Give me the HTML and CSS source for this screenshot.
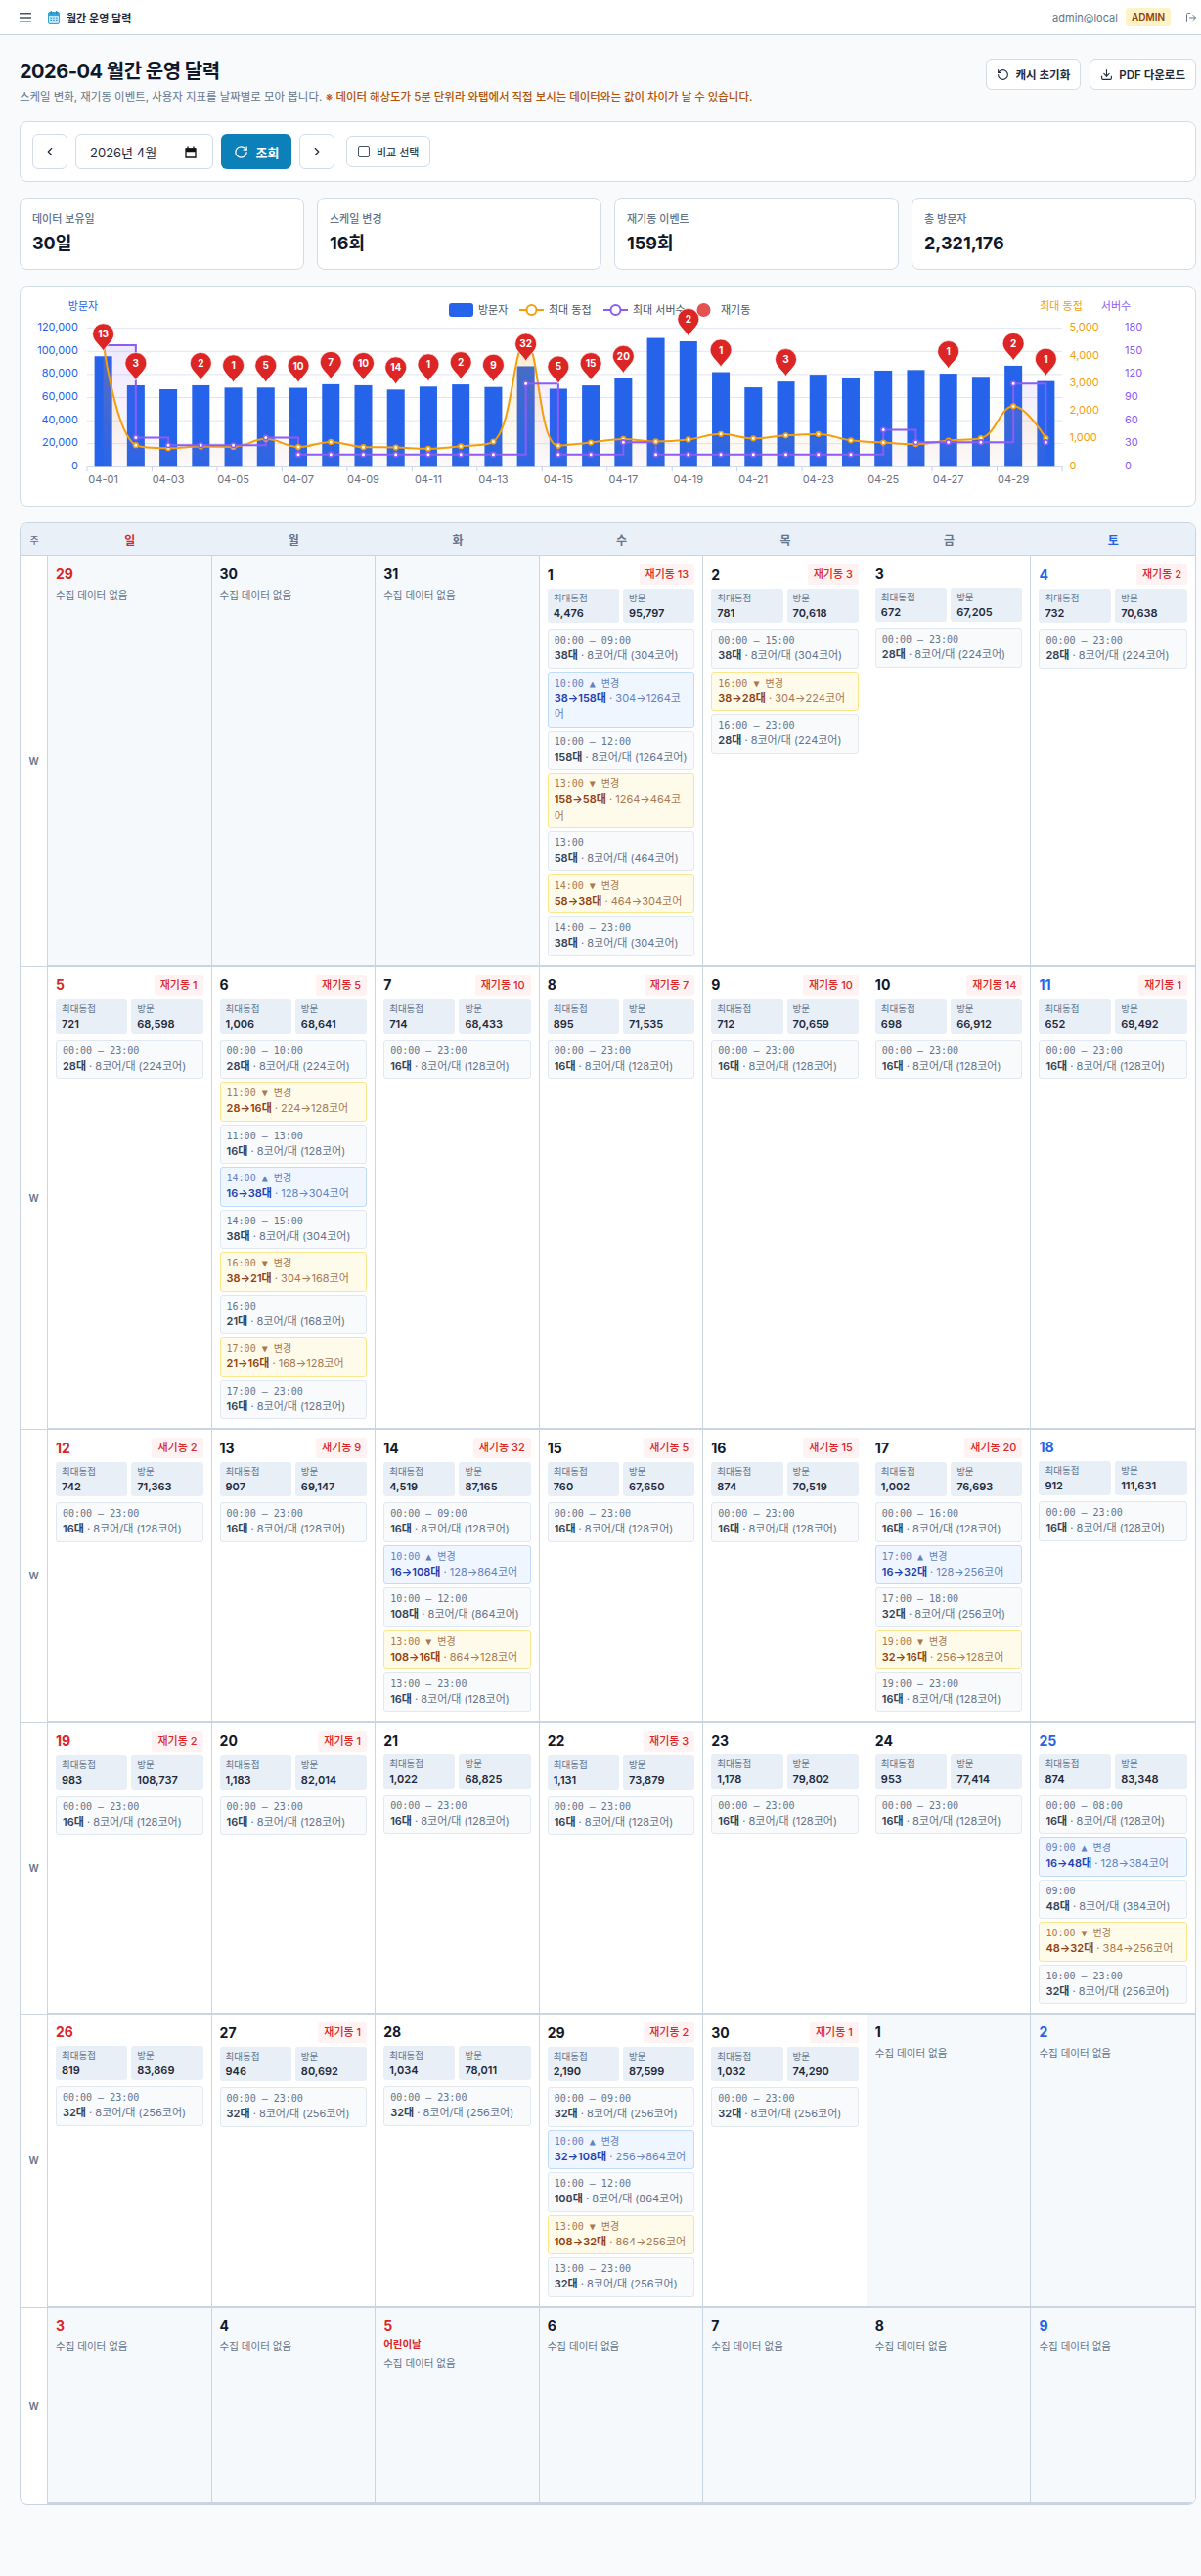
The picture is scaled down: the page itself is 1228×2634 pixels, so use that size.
FILE: index.html
```html
<!DOCTYPE html>
<html lang="ko">
<head>
<meta charset="utf-8">
<title>월간 운영 달력</title>
<link rel="stylesheet" href="styles.css">
</head>
<body>
<header class="topbar">
  <div class="topbar-left">
    <svg class="ico-menu" viewBox="0 0 12 10" width="12" height="10"><path d="M0 .8h12M0 5h12M0 9.2h12" fill="none" stroke="#475569" stroke-width="1.5"/></svg>
    <svg class="ico-cal" viewBox="0 0 12 14" width="12" height="14"><rect x=".5" y="1.5" width="11" height="12" rx="1.5" fill="#bae6fd" stroke="#38a3d8"/><rect x=".5" y="1.5" width="11" height="3.6" rx="1" fill="#38a3d8"/><path d="M3.3 0v3M8.7 0v3" stroke="#1d87c0" stroke-width="1.2"/><path d="M2.5 7.2h1.4M5.3 7.2h1.4M8.1 7.2h1.4M2.5 9.4h1.4M5.3 9.4h1.4M8.1 9.4h1.4M2.5 11.5h1.4M5.3 11.5h1.4" stroke="#1f7fb3"/></svg>
    <span class="app-title">월간 운영 달력</span>
  </div>
  <div class="topbar-right">
    <span class="user">admin@local</span>
    <span class="role">ADMIN</span>
    <svg class="lucide ico-out" viewBox="0 0 24 24" width="12" height="12"><path d="M9 21H5a2 2 0 0 1-2-2V5a2 2 0 0 1 2-2h4"/><polyline points="16 17 21 12 16 7"/><line x1="21" y1="12" x2="9" y2="12"/></svg>
  </div>
</header>

<main class="page">
  <section class="head">
    <div>
      <h1>2026-04 월간 운영 달력</h1>
      <p class="sub">스케일 변화, 재기동 이벤트, 사용자 지표를 날짜별로 모아 봅니다. <span class="warn">※ 데이터 해상도가 5분 단위라 와탭에서 직접 보시는 데이터와는 값이 차이가 날 수 있습니다.</span></p>
    </div>
    <div class="head-actions">
      <button class="btn"><svg class="lucide" viewBox="0 0 24 24" width="13" height="13"><path d="M3 12a9 9 0 1 0 9-9 9.75 9.75 0 0 0-6.74 2.74L3 8"/><path d="M3 3v5h5"/></svg>캐시 초기화</button>
      <button class="btn"><svg class="lucide" viewBox="0 0 24 24" width="13" height="13"><path d="M21 15v4a2 2 0 0 1-2 2H5a2 2 0 0 1-2-2v-4"/><polyline points="7 10 12 15 17 10"/><line x1="12" y1="15" x2="12" y2="3"/></svg>PDF 다운로드</button>
    </div>
  </section>

  <section class="card toolbar">
    <button class="nav"><svg class="lucide" viewBox="0 0 24 24" width="14" height="14"><polyline points="15 18 9 12 15 6"/></svg></button>
    <div class="month"><span>2026년 4월</span><svg viewBox="0 0 12 13" width="12" height="13"><path d="M1 3h10v9H1zM1 3h10v2.6H1z" fill="none" stroke="#111" stroke-width="1.3"/><rect x="1" y="2.5" width="10" height="2.5" fill="#111"/><path d="M3 .5v2M9 .5v2" stroke="#111" stroke-width="1.3"/></svg></div>
    <button class="search"><svg class="lucide" viewBox="0 0 24 24" width="15" height="15"><path d="M21 12a9 9 0 1 1-9-9c2.52 0 4.93 1 6.74 2.74L21 8"/><path d="M21 3v5h-5"/></svg>조회</button>
    <button class="nav"><svg class="lucide" viewBox="0 0 24 24" width="14" height="14"><polyline points="9 18 15 12 9 6"/></svg></button>
    <button class="compare"><span class="check"></span>비교 선택</button>
  </section>

  <section class="stats">
    <div class="card stat"><div class="stat-label">데이터 보유일</div><div class="stat-value">30일</div></div>
    <div class="card stat"><div class="stat-label">스케일 변경</div><div class="stat-value">16회</div></div>
    <div class="card stat"><div class="stat-label">재기동 이벤트</div><div class="stat-value">159회</div></div>
    <div class="card stat"><div class="stat-label">총 방문자</div><div class="stat-value">2,321,176</div></div>
  </section>

  <section class="card chart" id="chart"></section>

  <section class="calendar">
    <div class="row header">
      <div class="hd">주</div><div class="hd sun">일</div><div class="hd">월</div><div class="hd">화</div><div class="hd">수</div><div class="hd">목</div><div class="hd">금</div><div class="hd sat">토</div>
    </div>

    <div class="row">
      <div class="wk">W</div>
      <div class="day off"><div class="top"><span class="num sun">29</span></div><div class="none">수집 데이터 없음</div></div>
      <div class="day off"><div class="top"><span class="num">30</span></div><div class="none">수집 데이터 없음</div></div>
      <div class="day off"><div class="top"><span class="num">31</span></div><div class="none">수집 데이터 없음</div></div>
      <div class="day"><div class="top"><span class="num">1</span><span class="re">재기동 13</span></div>
        <div class="minis"><div class="mini"><span>최대동접</span><b>4,476</b></div><div class="mini"><span>방문</span><b>95,797</b></div></div>
        <div class="slots">
          <div class="slot"><div class="t">00:00 – 09:00</div><div class="d"><b>38대</b> · 8코어/대 (304코어)</div></div>
          <div class="slot up"><div class="t">10:00 ▲ 변경</div><div class="d"><b>38→158대</b> · 304→1264코어</div></div>
          <div class="slot"><div class="t">10:00 – 12:00</div><div class="d"><b>158대</b> · 8코어/대 (1264코어)</div></div>
          <div class="slot down"><div class="t">13:00 ▼ 변경</div><div class="d"><b>158→58대</b> · 1264→464코어</div></div>
          <div class="slot"><div class="t">13:00</div><div class="d"><b>58대</b> · 8코어/대 (464코어)</div></div>
          <div class="slot down"><div class="t">14:00 ▼ 변경</div><div class="d"><b>58→38대</b> · 464→304코어</div></div>
          <div class="slot"><div class="t">14:00 – 23:00</div><div class="d"><b>38대</b> · 8코어/대 (304코어)</div></div>
        </div></div>
      <div class="day"><div class="top"><span class="num">2</span><span class="re">재기동 3</span></div>
        <div class="minis"><div class="mini"><span>최대동접</span><b>781</b></div><div class="mini"><span>방문</span><b>70,618</b></div></div>
        <div class="slots">
          <div class="slot"><div class="t">00:00 – 15:00</div><div class="d"><b>38대</b> · 8코어/대 (304코어)</div></div>
          <div class="slot down"><div class="t">16:00 ▼ 변경</div><div class="d"><b>38→28대</b> · 304→224코어</div></div>
          <div class="slot"><div class="t">16:00 – 23:00</div><div class="d"><b>28대</b> · 8코어/대 (224코어)</div></div>
        </div></div>
      <div class="day"><div class="top"><span class="num">3</span></div>
        <div class="minis"><div class="mini"><span>최대동접</span><b>672</b></div><div class="mini"><span>방문</span><b>67,205</b></div></div>
        <div class="slots"><div class="slot"><div class="t">00:00 – 23:00</div><div class="d"><b>28대</b> · 8코어/대 (224코어)</div></div></div></div>
      <div class="day"><div class="top"><span class="num sat">4</span><span class="re">재기동 2</span></div>
        <div class="minis"><div class="mini"><span>최대동접</span><b>732</b></div><div class="mini"><span>방문</span><b>70,638</b></div></div>
        <div class="slots"><div class="slot"><div class="t">00:00 – 23:00</div><div class="d"><b>28대</b> · 8코어/대 (224코어)</div></div></div></div>
    </div>

    <div class="row">
      <div class="wk">W</div>
      <div class="day"><div class="top"><span class="num sun">5</span><span class="re">재기동 1</span></div>
        <div class="minis"><div class="mini"><span>최대동접</span><b>721</b></div><div class="mini"><span>방문</span><b>68,598</b></div></div>
        <div class="slots"><div class="slot"><div class="t">00:00 – 23:00</div><div class="d"><b>28대</b> · 8코어/대 (224코어)</div></div></div></div>
      <div class="day"><div class="top"><span class="num">6</span><span class="re">재기동 5</span></div>
        <div class="minis"><div class="mini"><span>최대동접</span><b>1,006</b></div><div class="mini"><span>방문</span><b>68,641</b></div></div>
        <div class="slots">
          <div class="slot"><div class="t">00:00 – 10:00</div><div class="d"><b>28대</b> · 8코어/대 (224코어)</div></div>
          <div class="slot down"><div class="t">11:00 ▼ 변경</div><div class="d"><b>28→16대</b> · 224→128코어</div></div>
          <div class="slot"><div class="t">11:00 – 13:00</div><div class="d"><b>16대</b> · 8코어/대 (128코어)</div></div>
          <div class="slot up"><div class="t">14:00 ▲ 변경</div><div class="d"><b>16→38대</b> · 128→304코어</div></div>
          <div class="slot"><div class="t">14:00 – 15:00</div><div class="d"><b>38대</b> · 8코어/대 (304코어)</div></div>
          <div class="slot down"><div class="t">16:00 ▼ 변경</div><div class="d"><b>38→21대</b> · 304→168코어</div></div>
          <div class="slot"><div class="t">16:00</div><div class="d"><b>21대</b> · 8코어/대 (168코어)</div></div>
          <div class="slot down"><div class="t">17:00 ▼ 변경</div><div class="d"><b>21→16대</b> · 168→128코어</div></div>
          <div class="slot"><div class="t">17:00 – 23:00</div><div class="d"><b>16대</b> · 8코어/대 (128코어)</div></div>
        </div></div>
      <div class="day"><div class="top"><span class="num">7</span><span class="re">재기동 10</span></div>
        <div class="minis"><div class="mini"><span>최대동접</span><b>714</b></div><div class="mini"><span>방문</span><b>68,433</b></div></div>
        <div class="slots"><div class="slot"><div class="t">00:00 – 23:00</div><div class="d"><b>16대</b> · 8코어/대 (128코어)</div></div></div></div>
      <div class="day"><div class="top"><span class="num">8</span><span class="re">재기동 7</span></div>
        <div class="minis"><div class="mini"><span>최대동접</span><b>895</b></div><div class="mini"><span>방문</span><b>71,535</b></div></div>
        <div class="slots"><div class="slot"><div class="t">00:00 – 23:00</div><div class="d"><b>16대</b> · 8코어/대 (128코어)</div></div></div></div>
      <div class="day"><div class="top"><span class="num">9</span><span class="re">재기동 10</span></div>
        <div class="minis"><div class="mini"><span>최대동접</span><b>712</b></div><div class="mini"><span>방문</span><b>70,659</b></div></div>
        <div class="slots"><div class="slot"><div class="t">00:00 – 23:00</div><div class="d"><b>16대</b> · 8코어/대 (128코어)</div></div></div></div>
      <div class="day"><div class="top"><span class="num">10</span><span class="re">재기동 14</span></div>
        <div class="minis"><div class="mini"><span>최대동접</span><b>698</b></div><div class="mini"><span>방문</span><b>66,912</b></div></div>
        <div class="slots"><div class="slot"><div class="t">00:00 – 23:00</div><div class="d"><b>16대</b> · 8코어/대 (128코어)</div></div></div></div>
      <div class="day"><div class="top"><span class="num sat">11</span><span class="re">재기동 1</span></div>
        <div class="minis"><div class="mini"><span>최대동접</span><b>652</b></div><div class="mini"><span>방문</span><b>69,492</b></div></div>
        <div class="slots"><div class="slot"><div class="t">00:00 – 23:00</div><div class="d"><b>16대</b> · 8코어/대 (128코어)</div></div></div></div>
    </div>

    <div class="row">
      <div class="wk">W</div>
      <div class="day"><div class="top"><span class="num sun">12</span><span class="re">재기동 2</span></div>
        <div class="minis"><div class="mini"><span>최대동접</span><b>742</b></div><div class="mini"><span>방문</span><b>71,363</b></div></div>
        <div class="slots"><div class="slot"><div class="t">00:00 – 23:00</div><div class="d"><b>16대</b> · 8코어/대 (128코어)</div></div></div></div>
      <div class="day"><div class="top"><span class="num">13</span><span class="re">재기동 9</span></div>
        <div class="minis"><div class="mini"><span>최대동접</span><b>907</b></div><div class="mini"><span>방문</span><b>69,147</b></div></div>
        <div class="slots"><div class="slot"><div class="t">00:00 – 23:00</div><div class="d"><b>16대</b> · 8코어/대 (128코어)</div></div></div></div>
      <div class="day"><div class="top"><span class="num">14</span><span class="re">재기동 32</span></div>
        <div class="minis"><div class="mini"><span>최대동접</span><b>4,519</b></div><div class="mini"><span>방문</span><b>87,165</b></div></div>
        <div class="slots">
          <div class="slot"><div class="t">00:00 – 09:00</div><div class="d"><b>16대</b> · 8코어/대 (128코어)</div></div>
          <div class="slot up"><div class="t">10:00 ▲ 변경</div><div class="d"><b>16→108대</b> · 128→864코어</div></div>
          <div class="slot"><div class="t">10:00 – 12:00</div><div class="d"><b>108대</b> · 8코어/대 (864코어)</div></div>
          <div class="slot down"><div class="t">13:00 ▼ 변경</div><div class="d"><b>108→16대</b> · 864→128코어</div></div>
          <div class="slot"><div class="t">13:00 – 23:00</div><div class="d"><b>16대</b> · 8코어/대 (128코어)</div></div>
        </div></div>
      <div class="day"><div class="top"><span class="num">15</span><span class="re">재기동 5</span></div>
        <div class="minis"><div class="mini"><span>최대동접</span><b>760</b></div><div class="mini"><span>방문</span><b>67,650</b></div></div>
        <div class="slots"><div class="slot"><div class="t">00:00 – 23:00</div><div class="d"><b>16대</b> · 8코어/대 (128코어)</div></div></div></div>
      <div class="day"><div class="top"><span class="num">16</span><span class="re">재기동 15</span></div>
        <div class="minis"><div class="mini"><span>최대동접</span><b>874</b></div><div class="mini"><span>방문</span><b>70,519</b></div></div>
        <div class="slots"><div class="slot"><div class="t">00:00 – 23:00</div><div class="d"><b>16대</b> · 8코어/대 (128코어)</div></div></div></div>
      <div class="day"><div class="top"><span class="num">17</span><span class="re">재기동 20</span></div>
        <div class="minis"><div class="mini"><span>최대동접</span><b>1,002</b></div><div class="mini"><span>방문</span><b>76,693</b></div></div>
        <div class="slots">
          <div class="slot"><div class="t">00:00 – 16:00</div><div class="d"><b>16대</b> · 8코어/대 (128코어)</div></div>
          <div class="slot up"><div class="t">17:00 ▲ 변경</div><div class="d"><b>16→32대</b> · 128→256코어</div></div>
          <div class="slot"><div class="t">17:00 – 18:00</div><div class="d"><b>32대</b> · 8코어/대 (256코어)</div></div>
          <div class="slot down"><div class="t">19:00 ▼ 변경</div><div class="d"><b>32→16대</b> · 256→128코어</div></div>
          <div class="slot"><div class="t">19:00 – 23:00</div><div class="d"><b>16대</b> · 8코어/대 (128코어)</div></div>
        </div></div>
      <div class="day"><div class="top"><span class="num sat">18</span></div>
        <div class="minis"><div class="mini"><span>최대동접</span><b>912</b></div><div class="mini"><span>방문</span><b>111,631</b></div></div>
        <div class="slots"><div class="slot"><div class="t">00:00 – 23:00</div><div class="d"><b>16대</b> · 8코어/대 (128코어)</div></div></div></div>
    </div>

    <div class="row">
      <div class="wk">W</div>
      <div class="day"><div class="top"><span class="num sun">19</span><span class="re">재기동 2</span></div>
        <div class="minis"><div class="mini"><span>최대동접</span><b>983</b></div><div class="mini"><span>방문</span><b>108,737</b></div></div>
        <div class="slots"><div class="slot"><div class="t">00:00 – 23:00</div><div class="d"><b>16대</b> · 8코어/대 (128코어)</div></div></div></div>
      <div class="day"><div class="top"><span class="num">20</span><span class="re">재기동 1</span></div>
        <div class="minis"><div class="mini"><span>최대동접</span><b>1,183</b></div><div class="mini"><span>방문</span><b>82,014</b></div></div>
        <div class="slots"><div class="slot"><div class="t">00:00 – 23:00</div><div class="d"><b>16대</b> · 8코어/대 (128코어)</div></div></div></div>
      <div class="day"><div class="top"><span class="num">21</span></div>
        <div class="minis"><div class="mini"><span>최대동접</span><b>1,022</b></div><div class="mini"><span>방문</span><b>68,825</b></div></div>
        <div class="slots"><div class="slot"><div class="t">00:00 – 23:00</div><div class="d"><b>16대</b> · 8코어/대 (128코어)</div></div></div></div>
      <div class="day"><div class="top"><span class="num">22</span><span class="re">재기동 3</span></div>
        <div class="minis"><div class="mini"><span>최대동접</span><b>1,131</b></div><div class="mini"><span>방문</span><b>73,879</b></div></div>
        <div class="slots"><div class="slot"><div class="t">00:00 – 23:00</div><div class="d"><b>16대</b> · 8코어/대 (128코어)</div></div></div></div>
      <div class="day"><div class="top"><span class="num">23</span></div>
        <div class="minis"><div class="mini"><span>최대동접</span><b>1,178</b></div><div class="mini"><span>방문</span><b>79,802</b></div></div>
        <div class="slots"><div class="slot"><div class="t">00:00 – 23:00</div><div class="d"><b>16대</b> · 8코어/대 (128코어)</div></div></div></div>
      <div class="day"><div class="top"><span class="num">24</span></div>
        <div class="minis"><div class="mini"><span>최대동접</span><b>953</b></div><div class="mini"><span>방문</span><b>77,414</b></div></div>
        <div class="slots"><div class="slot"><div class="t">00:00 – 23:00</div><div class="d"><b>16대</b> · 8코어/대 (128코어)</div></div></div></div>
      <div class="day"><div class="top"><span class="num sat">25</span></div>
        <div class="minis"><div class="mini"><span>최대동접</span><b>874</b></div><div class="mini"><span>방문</span><b>83,348</b></div></div>
        <div class="slots">
          <div class="slot"><div class="t">00:00 – 08:00</div><div class="d"><b>16대</b> · 8코어/대 (128코어)</div></div>
          <div class="slot up"><div class="t">09:00 ▲ 변경</div><div class="d"><b>16→48대</b> · 128→384코어</div></div>
          <div class="slot"><div class="t">09:00</div><div class="d"><b>48대</b> · 8코어/대 (384코어)</div></div>
          <div class="slot down"><div class="t">10:00 ▼ 변경</div><div class="d"><b>48→32대</b> · 384→256코어</div></div>
          <div class="slot"><div class="t">10:00 – 23:00</div><div class="d"><b>32대</b> · 8코어/대 (256코어)</div></div>
        </div></div>
    </div>

    <div class="row">
      <div class="wk">W</div>
      <div class="day"><div class="top"><span class="num sun">26</span></div>
        <div class="minis"><div class="mini"><span>최대동접</span><b>819</b></div><div class="mini"><span>방문</span><b>83,869</b></div></div>
        <div class="slots"><div class="slot"><div class="t">00:00 – 23:00</div><div class="d"><b>32대</b> · 8코어/대 (256코어)</div></div></div></div>
      <div class="day"><div class="top"><span class="num">27</span><span class="re">재기동 1</span></div>
        <div class="minis"><div class="mini"><span>최대동접</span><b>946</b></div><div class="mini"><span>방문</span><b>80,692</b></div></div>
        <div class="slots"><div class="slot"><div class="t">00:00 – 23:00</div><div class="d"><b>32대</b> · 8코어/대 (256코어)</div></div></div></div>
      <div class="day"><div class="top"><span class="num">28</span></div>
        <div class="minis"><div class="mini"><span>최대동접</span><b>1,034</b></div><div class="mini"><span>방문</span><b>78,011</b></div></div>
        <div class="slots"><div class="slot"><div class="t">00:00 – 23:00</div><div class="d"><b>32대</b> · 8코어/대 (256코어)</div></div></div></div>
      <div class="day"><div class="top"><span class="num">29</span><span class="re">재기동 2</span></div>
        <div class="minis"><div class="mini"><span>최대동접</span><b>2,190</b></div><div class="mini"><span>방문</span><b>87,599</b></div></div>
        <div class="slots">
          <div class="slot"><div class="t">00:00 – 09:00</div><div class="d"><b>32대</b> · 8코어/대 (256코어)</div></div>
          <div class="slot up"><div class="t">10:00 ▲ 변경</div><div class="d"><b>32→108대</b> · 256→864코어</div></div>
          <div class="slot"><div class="t">10:00 – 12:00</div><div class="d"><b>108대</b> · 8코어/대 (864코어)</div></div>
          <div class="slot down"><div class="t">13:00 ▼ 변경</div><div class="d"><b>108→32대</b> · 864→256코어</div></div>
          <div class="slot"><div class="t">13:00 – 23:00</div><div class="d"><b>32대</b> · 8코어/대 (256코어)</div></div>
        </div></div>
      <div class="day"><div class="top"><span class="num">30</span><span class="re">재기동 1</span></div>
        <div class="minis"><div class="mini"><span>최대동접</span><b>1,032</b></div><div class="mini"><span>방문</span><b>74,290</b></div></div>
        <div class="slots"><div class="slot"><div class="t">00:00 – 23:00</div><div class="d"><b>32대</b> · 8코어/대 (256코어)</div></div></div></div>
      <div class="day off"><div class="top"><span class="num">1</span></div><div class="none">수집 데이터 없음</div></div>
      <div class="day off"><div class="top"><span class="num sat">2</span></div><div class="none">수집 데이터 없음</div></div>
    </div>

    <div class="row last">
      <div class="wk">W</div>
      <div class="day off"><div class="top"><span class="num sun">3</span></div><div class="none">수집 데이터 없음</div></div>
      <div class="day off"><div class="top"><span class="num">4</span></div><div class="none">수집 데이터 없음</div></div>
      <div class="day off"><div class="top"><span class="num sun">5</span></div><div class="holiday">어린이날</div><div class="none">수집 데이터 없음</div></div>
      <div class="day off"><div class="top"><span class="num">6</span></div><div class="none">수집 데이터 없음</div></div>
      <div class="day off"><div class="top"><span class="num">7</span></div><div class="none">수집 데이터 없음</div></div>
      <div class="day off"><div class="top"><span class="num">8</span></div><div class="none">수집 데이터 없음</div></div>
      <div class="day off"><div class="top"><span class="num sat">9</span></div><div class="none">수집 데이터 없음</div></div>
    </div>
  </section>
</main>
<script src="chart.js"></script>
</body>
</html>
```
FILE: styles.css
```css
* { box-sizing: border-box; }
html, body { margin: 0; padding: 0; }
body {
  background: #f8fafc;
  color: #0f172a;
  font-family: "Inter", "Noto Sans CJK KR", "Noto Sans", sans-serif;
  font-size: 12px;
  width: 1228px;
  min-height: 2634px;
  overflow: hidden;
}
button { font-family: inherit; cursor: pointer; }
.lucide { fill: none; stroke: currentColor; stroke-width: 2; stroke-linecap: round; stroke-linejoin: round; flex: none; }

.topbar {
  height: 36px;
  background: #fff;
  border-bottom: 1px solid #cbd5e1;
  display: flex;
  justify-content: space-between;
  align-items: center;
  padding: 0 4px 0 20px;
}
.topbar-left, .topbar-right { display: flex; align-items: center; }
.ico-menu { margin-right: 17px; }
.ico-cal { margin-right: 7px; }
.app-title { font-size: 11px; font-weight: 600; color: #1e293b; }
.user { font-size: 11px; color: #64748b; margin-right: 8px; }
.role { background: #fef3c7; color: #92400e; font-size: 10px; font-weight: 600; border-radius: 3px; height: 19px; line-height: 19px; padding: 0 6px; margin-right: 15px; }
.ico-out { color: #64748b; }

.page { padding: 24px 5px 75px 20px; display: flex; flex-direction: column; gap: 16px; }
.card { background: #fff; border: 1px solid #d3dde8; border-radius: 8px; }

.head { display: flex; justify-content: space-between; align-items: flex-start; height: 48px; }
h1 { margin: -1px 0 0; font-size: 20px; line-height: 28px; font-weight: 700; letter-spacing: -0.5px; color: #0f172a; }
.sub { margin: 3px 0 0; font-size: 11.45px; line-height: 18px; color: #64748b; }
.warn { color: #b45309; font-weight: 500; }
.head-actions { display: flex; gap: 9px; }
.btn {
  height: 32px; display: flex; align-items: center; gap: 6px;
  background: #fff; border: 1px solid #d3dde8; border-radius: 6px;
  padding: 0 10px; font-size: 11.5px; font-weight: 600; color: #1e293b;
}

.toolbar { height: 62px; padding: 12px; display: flex; align-items: center; gap: 8px; }
.nav {
  width: 36px; height: 36px; display: flex; align-items: center; justify-content: center;
  background: #fff; border: 1px solid #d3dde8; border-radius: 6px; color: #1e293b; padding: 0;
}
.month {
  width: 141px; height: 36px; display: flex; align-items: center; justify-content: space-between;
  border: 1px solid #d3dde8; border-radius: 6px; padding: 0 16px 0 14px; font-size: 13px; color: #1e293b;
}
.search {
  width: 72px; height: 36px; display: flex; align-items: center; justify-content: center; gap: 8px;
  background: #0c80b9; color: #fff; border: 0; border-radius: 6px; font-size: 13px; font-weight: 700; padding: 0;
}
.compare {
  height: 32px; margin-left: 4px; display: flex; align-items: center; gap: 7px;
  background: #fff; border: 1px solid #d3dde8; border-radius: 6px; padding: 0 11px; font-size: 11px; font-weight: 500; color: #334155;
}
.check { width: 12px; height: 12px; border: 1.3px solid #475569; border-radius: 2px; background: #fff; }

.stats { display: grid; grid-template-columns: repeat(4, 1fr); gap: 13px; }
.stat { height: 74px; padding: 13px 12px; }
.stat-label { font-size: 11px; line-height: 16px; color: #64748b; font-weight: 500; }
.stat-value { font-size: 18px; line-height: 24px; font-weight: 700; color: #0f172a; margin-top: 5px; }

.chart { height: 226px; overflow: hidden; }
.chart svg { display: block; width: 1201px; height: 224px; }
.chart text { font-family: "Inter", "Noto Sans CJK KR", sans-serif; font-size: 11px; }

.calendar { border: 1px solid #cbd5e1; border-radius: 8px; overflow: hidden; background: #fff; }
.row { display: grid; grid-template-columns: 28px repeat(7, 1fr); }
.header { background: #eaf0f7; border-bottom: 1px solid #cbd5e1; height: 34px; }
.hd { display: flex; align-items: center; justify-content: center; font-size: 12px; font-weight: 600; color: #64748b; }
.hd:first-child { font-size: 10px; font-weight: 500; }
.hd.sun { color: #dc2626; }
.hd.sat { color: #2563eb; }
.wk {
  display: flex; align-items: center; justify-content: center;
  font-size: 10px; font-weight: 600; color: #64748b;
  border-bottom: 1px solid #cbd5e1; border-right: 1px solid #cbd5e1;
}
.day { padding: 8px 8px 9px; border-right: 1px solid #cbd5e1; border-bottom: 2px solid #cbd5e1; min-width: 0; background: #fff; }
.day:last-child { border-right: 0; }
.day.off { background: #f5f9fc; }
.last { min-height: 200px; }
.last .wk { border-bottom: 0; }
.top { display: flex; justify-content: space-between; align-items: center; min-height: 20px; margin-bottom: 4px; }
.num { font-size: 14px; line-height: 20px; font-weight: 700; color: #0f172a; }
.num.sun { color: #dc2626; }
.num.sat { color: #2563eb; }
.re { background: #fef2f2; color: #dc2626; font-size: 11px; font-weight: 500; line-height: 21px; height: 21px; padding: 0 6px; border-radius: 3px; }
.none { font-size: 10.5px; line-height: 16px; color: #64748b; }
.holiday { font-size: 10.5px; line-height: 15px; font-weight: 600; color: #dc2626; margin-bottom: 4px; margin-top: -2px; }
.minis { display: grid; grid-template-columns: 1fr 1fr; gap: 4px; }
.mini { background: #e9eff7; border-radius: 3px; height: 35px; padding: 3px 6px 0; display: flex; flex-direction: column; }
.mini span { font-size: 9.5px; line-height: 13px; color: #64748b; }
.mini b { font-size: 11px; line-height: 18px; font-weight: 600; color: #1e293b; }
.slots { margin-top: 6px; display: flex; flex-direction: column; gap: 3px; }
.slot { background: #f8fafc; border: 1px solid #e2e8f0; border-radius: 3px; padding: 4px 6px; }
.t { font-family: "DejaVu Sans Mono", "Noto Sans CJK KR", monospace; font-size: 10px; line-height: 14px; color: #64748b; }
.d { font-size: 11px; line-height: 16.5px; color: #64748b; }
.d b { font-weight: 600; color: #334155; }
.slot.up { background: #eff6ff; border-color: #bfdbfe; }
.slot.up .t, .slot.up .d { color: #6482c0; }
.slot.up .d b { color: #1e40af; }
.slot.down { background: #fffbeb; border-color: #fde68a; }
.slot.down .t, .slot.down .d { color: #a97850; }
.slot.down .d b { color: #92400e; }
```
FILE: chart.js
```js
(function () {
  var visits = [95797,70618,67205,70638,68598,68641,68433,71535,70659,66912,69492,71363,69147,87165,67650,70519,76693,111631,108737,82014,68825,73879,79802,77414,83348,83869,80692,78011,87599,74290];
  var conc = [4476,781,672,732,721,1006,714,895,712,698,652,742,907,4519,760,874,1002,912,983,1183,1022,1131,1178,953,874,819,946,1034,2190,1032];
  var servers = [158,38,28,28,28,38,16,16,16,16,16,16,16,108,16,16,32,16,16,16,16,16,16,16,48,32,32,32,108,32];
  var reboots = {1:13,2:3,4:2,5:1,6:5,7:10,8:7,9:10,10:14,11:1,12:2,13:9,14:32,15:5,16:15,17:20,19:2,20:1,22:3,27:1,29:2,30:1};

  var L = 89, R = 1086, T = 335.7, B = 477.3, W = (R - L) / 30, H = B - T;
  function cx(i) { return L + W * (i + 0.5); }
  function yV(v) { return B - H * v / 120000; }
  function yC(v) { return B - H * v / 5000; }
  function yS(v) { return B - H * v / 180; }
  function f(n) { return n.toFixed(2); }
  function text(x, y, s, fill, anchor, extra) {
    return '<text x="' + f(x) + '" y="' + f(y) + '" fill="' + fill + '" text-anchor="' + (anchor || 'start') + '"' + (extra || '') + '>' + s + '</text>';
  }

  var o = '<svg viewBox="21 293 1201 224" xmlns="http://www.w3.org/2000/svg"><defs>' +
    '<linearGradient id="ga" x1="0" y1="0" x2="0" y2="1"><stop offset="0" stop-color="#f59e0b" stop-opacity=".2"/><stop offset="1" stop-color="#f59e0b" stop-opacity=".02"/></linearGradient>' +
    '<linearGradient id="gb" x1="0" y1="0" x2="0" y2="1"><stop offset="0" stop-color="#8b5cf6" stop-opacity=".14"/><stop offset="1" stop-color="#8b5cf6" stop-opacity=".02"/></linearGradient>' +
    '</defs>';

  // grid and axes
  for (var g = 0; g < 6; g++) {
    var gy = T + H * g / 6;
    o += '<path d="M' + L + ' ' + f(gy) + 'H' + R + '" stroke="#e0e6f1" stroke-width="1"/>';
  }
  o += '<path d="M' + L + ' ' + f(B) + 'H' + R + '" stroke="#c6d2e6" stroke-width="1"/>';
  for (var t = 0; t <= 30; t += 2) {
    var tx = t === 30 ? R : L + W * t;
    o += '<path d="M' + f(tx) + ' ' + f(B) + 'v5" stroke="#c6d2e6" stroke-width="1"/>';
  }
  var lv = ['120,000','100,000','80,000','60,000','40,000','20,000','0'];
  var rv = ['180','150','120','90','60','30','0'];
  for (var a = 0; a < 7; a++) {
    var ay = T + H * a / 6 + 2.5;
    o += text(80, ay, lv[a], '#2563eb', 'end');
    o += text(1150, ay, rv[a], '#8b5cf6');
  }
  var cv = ['5,000','4,000','3,000','2,000','1,000','0'];
  for (var c = 0; c < 6; c++) {
    o += text(1093.5, T + H * c / 5 + 2.5, cv[c], '#f59e0b');
  }
  o += text(85, 316.5, '방문자', '#2563eb', 'middle');
  o += text(1085, 316.5, '최대 동접', '#f59e0b', 'middle');
  o += text(1141, 316.5, '서버수', '#8b5cf6', 'middle');
  for (var x = 0; x < 30; x += 2) {
    o += text(cx(x), 493.5, '04-' + (x + 1 < 10 ? '0' : '') + (x + 1), '#6b7280', 'middle');
  }

  // bars
  visits.forEach(function (v, i) {
    o += '<rect x="' + f(cx(i) - 9) + '" y="' + f(yV(v)) + '" width="18" height="' + f(B - yV(v)) + '" fill="#2563eb"/>';
  });

  // smooth line (ECharts-like)
  function smooth(pts, s) {
    var d = 'M' + f(pts[0][0]) + ' ' + f(pts[0][1]);
    var c0x = pts[0][0], c0y = pts[0][1];
    for (var i = 0; i < pts.length - 1; i++) {
      var p = pts[i], n = pts[i + 1], c1x, c1y, nc0x, nc0y;
      if (i + 2 < pts.length) {
        var q = pts[i + 2];
        var dx = q[0] - p[0], dy = q[1] - p[1];
        var l0 = Math.hypot(n[0] - p[0], n[1] - p[1]), l1 = Math.hypot(q[0] - n[0], q[1] - n[1]);
        var r = l1 / (l0 + l1);
        nc0x = n[0] + dx * s * r; nc0y = n[1] + dy * s * r;
        nc0x = Math.max(Math.min(nc0x, Math.max(q[0], n[0])), Math.min(q[0], n[0]));
        nc0y = Math.max(Math.min(nc0y, Math.max(q[1], n[1])), Math.min(q[1], n[1]));
        var ax = nc0x - n[0], ay2 = nc0y - n[1];
        c1x = n[0] - ax * l0 / l1; c1y = n[1] - ay2 * l0 / l1;
        c1x = Math.max(Math.min(c1x, Math.max(p[0], n[0])), Math.min(p[0], n[0]));
        c1y = Math.max(Math.min(c1y, Math.max(p[1], n[1])), Math.min(p[1], n[1]));
        ax = n[0] - c1x; ay2 = n[1] - c1y;
        nc0x = n[0] + ax * l1 / l0; nc0y = n[1] + ay2 * l1 / l0;
      } else {
        c1x = n[0]; c1y = n[1]; nc0x = n[0]; nc0y = n[1];
      }
      d += 'C' + f(c0x) + ' ' + f(c0y) + ' ' + f(c1x) + ' ' + f(c1y) + ' ' + f(n[0]) + ' ' + f(n[1]);
      c0x = nc0x; c0y = nc0y;
    }
    return d;
  }
  var cp = conc.map(function (v, i) { return [cx(i), yC(v)]; });
  var sp = servers.map(function (v, i) { return [cx(i), yS(v)]; });
  var cl = smooth(cp, 0.4);
  var sl = 'M' + f(sp[0][0]) + ' ' + f(sp[0][1]);
  for (var k = 1; k < sp.length; k++) sl += 'H' + f(sp[k][0]) + 'V' + f(sp[k][1]);

  o += '<path d="' + sl + 'V' + f(B) + 'H' + f(sp[0][0]) + 'Z" fill="url(#gb)"/>';
  o += '<path d="' + cl + 'V' + f(B) + 'H' + f(cp[0][0]) + 'Z" fill="url(#ga)"/>';
  o += '<path d="' + cl + '" fill="none" stroke="#f59e0b" stroke-width="2"/>';
  o += '<path d="' + sl + '" fill="none" stroke="#8b5cf6" stroke-width="2"/>';
  cp.forEach(function (p) {
    o += '<circle cx="' + f(p[0]) + '" cy="' + f(p[1]) + '" r="2.3" fill="#fff" stroke="#f59e0b" stroke-width="1.6"/>';
  });
  sp.forEach(function (p) {
    o += '<circle cx="' + f(p[0]) + '" cy="' + f(p[1]) + '" r="2.3" fill="#fff" stroke="#8b5cf6" stroke-width="1.6"/>';
  });

  // legend
  o += '<rect x="459" y="310" width="25" height="14" rx="3" fill="#2563eb"/>';
  o += text(489, 321, '방문자', '#4b5563');
  o += '<path d="M531 317h25" stroke="#f59e0b" stroke-width="2"/><circle cx="543.5" cy="317" r="5" fill="#fff" stroke="#f59e0b" stroke-width="2"/>';
  o += text(561, 321, '최대 동접', '#4b5563');
  o += '<path d="M617 317h25" stroke="#8b5cf6" stroke-width="2"/><circle cx="629.5" cy="317" r="5" fill="#fff" stroke="#8b5cf6" stroke-width="2"/>';
  o += text(647, 321, '최대 서버수', '#4b5563');
  o += '<circle cx="719.5" cy="317" r="7" fill="#dc2626" fill-opacity=".8"/>';
  o += text(737, 321, '재기동', '#4b5563');

  // reboot pins
  visits.forEach(function (v, i) {
    var n = reboots[i + 1];
    if (!n) return;
    var tipX = cx(i), tipY = yV(v) - 5;
    o += '<g transform="translate(' + f(tipX) + ' ' + f(tipY) + ')">' +
      '<path d="M0 0C-1.8-5-11-10.5-11-17.5A11 11 0 1 1 11-17.5C11-10.5 1.8-5 0 0Z" fill="#dc2626" stroke="#fff" stroke-width=".7"/>' +
      '<text x="0" y="-14" fill="#fff" text-anchor="middle" style="font-size:10px;font-weight:700">' + n + '</text></g>';
  });
  o += '</svg>';
  document.getElementById('chart').innerHTML = o;
})();
```
